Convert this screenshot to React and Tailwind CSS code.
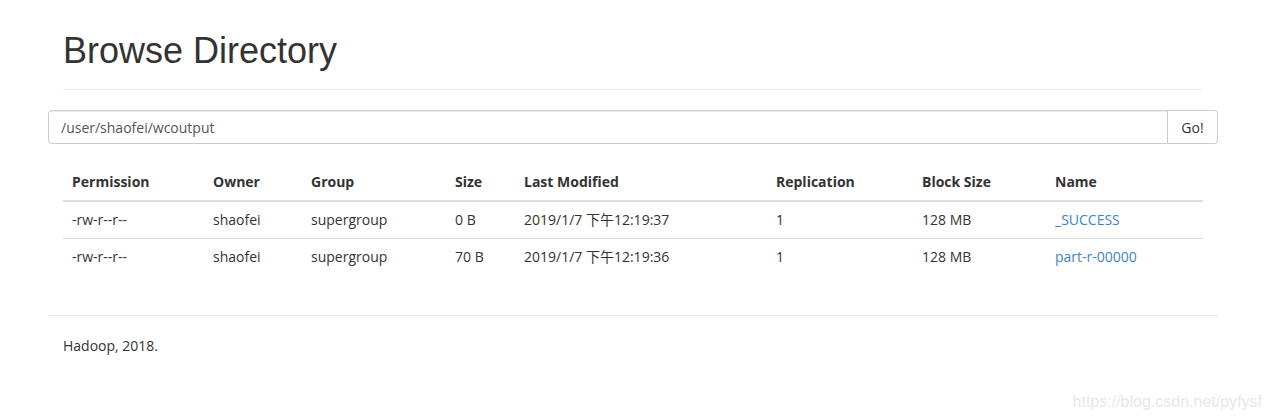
export default function App() {
  const body = { fontFamily: '"Open Sans", "Noto Sans CJK SC", sans-serif' };
  const rows = [
    ["-rw-r--r--", "shaofei", "supergroup", "0 B", "2019/1/7 下午12:19:37", "1", "128 MB", "_SUCCESS"],
    ["-rw-r--r--", "shaofei", "supergroup", "70 B", "2019/1/7 下午12:19:36", "1", "128 MB", "part-r-00000"],
  ];
  const widths = ["w-[141px]", "w-[98px]", "w-[144px]", "w-[69px]", "w-[252px]", "w-[146px]", "w-[133px]", "flex-1"];
  const heads = ["Permission", "Owner", "Group", "Size", "Last Modified", "Replication", "Block Size", "Name"];
  return (
    <div className="relative min-h-[420px] w-[1272px] bg-white text-[14px] text-[#333]" style={body}>
      <div className="ml-[48px] w-[1170px]">
        <div className="mx-[15px] pt-[31px] pb-[18px] border-b border-[#eee]">
          <h1 className="text-[36px] leading-[40px] font-normal text-[#333]" style={{ fontFamily: '"Liberation Sans", Arial, sans-serif' }}>
            Browse Directory
          </h1>
        </div>
        <div className="mt-[20px] flex h-[34px]">
          <div className="flex-1 flex items-center border border-[#ccc] rounded-l-[4px] px-[12px] text-[#555] shadow-[inset_0_1px_1px_rgba(0,0,0,0.075)]">
            /user/shaofei/wcoutput
          </div>
          <div className="w-[50px] flex items-center justify-center border border-l-0 border-[#ccc] rounded-r-[4px] text-[#333]">
            Go!
          </div>
        </div>
        <div className="mx-[15px] mt-[20px]">
          <div className="flex border-b-2 border-[#ddd]">
            {heads.map((h, i) => (
              <div key={h} className={`${widths[i]} pl-[9px] pr-[7px] py-[8px] leading-[20px] font-bold`}>{h}</div>
            ))}
          </div>
          {rows.map((r, ri) => (
            <div key={ri} className={`flex ${ri > 0 ? "border-t border-[#ddd]" : ""}`}>
              {r.map((c, i) => (
                <div key={i} className={`${widths[i]} pl-[9px] pr-[7px] py-[8px] leading-[20px] ${i === 7 ? "text-[#3f84c8]" : ""}`}>{c}</div>
              ))}
            </div>
          ))}
        </div>
        <div className="pt-[20px] border-t border-[#eee] mt-[40px]">
          <p className="px-[15px] leading-[20px]">Hadoop, 2018.</p>
        </div>
      </div>
      <div
        className="absolute right-[10px] bottom-[6px] text-[16px] text-[#e8e8e8]"
        style={{ fontFamily: '"Liberation Sans", Arial, sans-serif' }}
      >
        https://blog.csdn.net/pyfysf
      </div>
    </div>
  );
}
